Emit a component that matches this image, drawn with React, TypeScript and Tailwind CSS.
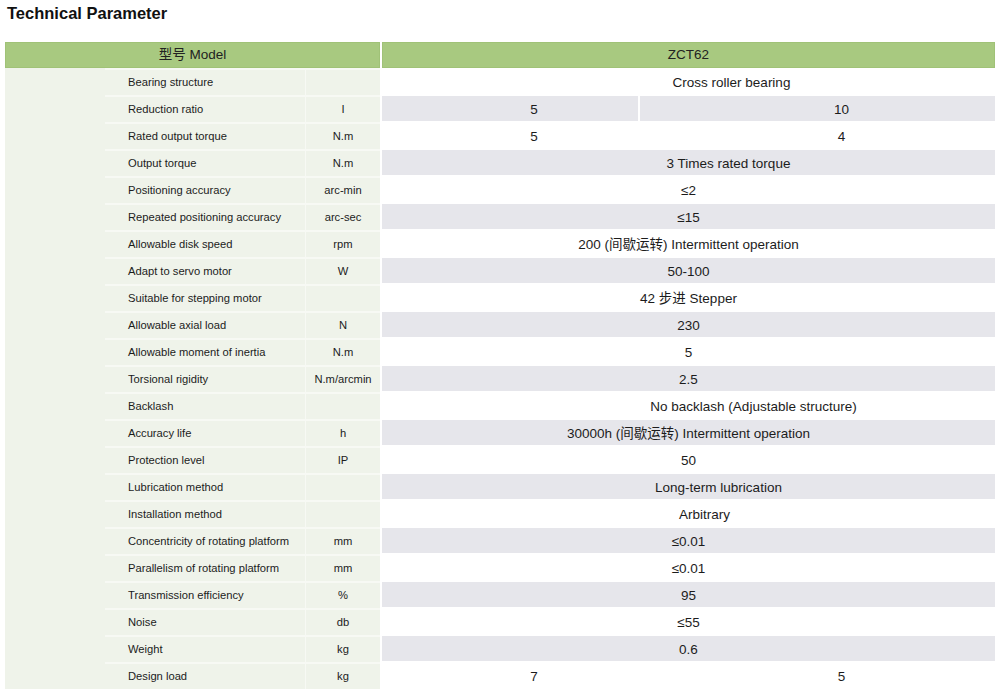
import React from 'react'

type Row = {
  label: string
  unit: string
  value?: string
  shift?: string
  split?: [string, string]
}

const rows: Row[] = [
  { label: 'Bearing structure', unit: '', value: 'Cross roller bearing', shift: 'pl-[86px]' },
  { label: 'Reduction ratio', unit: 'I', split: ['5', '10'] },
  { label: 'Rated output torque', unit: 'N.m', split: ['5', '4'] },
  { label: 'Output torque', unit: 'N.m', value: '3 Times rated torque', shift: 'pl-[80px]' },
  { label: 'Positioning accuracy', unit: 'arc-min', value: '≤2' },
  { label: 'Repeated positioning accuracy', unit: 'arc-sec', value: '≤15' },
  { label: 'Allowable disk speed', unit: 'rpm', value: '200 (间歇运转) Intermittent operation' },
  { label: 'Adapt to servo motor', unit: 'W', value: '50-100' },
  { label: 'Suitable for stepping motor', unit: '', value: '42 步进 Stepper' },
  { label: 'Allowable axial load', unit: 'N', value: '230' },
  { label: 'Allowable moment of inertia', unit: 'N.m', value: '5' },
  { label: 'Torsional rigidity', unit: 'N.m/arcmin', value: '2.5' },
  { label: 'Backlash', unit: '', value: 'No backlash (Adjustable structure)', shift: 'pl-[130px]' },
  { label: 'Accuracy life', unit: 'h', value: '30000h (间歇运转) Intermittent operation' },
  { label: 'Protection level', unit: 'IP', value: '50' },
  { label: 'Lubrication method', unit: '', value: 'Long-term lubrication', shift: 'pl-[60px]' },
  { label: 'Installation method', unit: '', value: 'Arbitrary', shift: 'pl-[32px]' },
  { label: 'Concentricity of rotating platform', unit: 'mm', value: '≤0.01' },
  { label: 'Parallelism of rotating platform', unit: 'mm', value: '≤0.01' },
  { label: 'Transmission efficiency', unit: '%', value: '95' },
  { label: 'Noise', unit: 'db', value: '≤55' },
  { label: 'Weight', unit: 'kg', value: '0.6' },
  { label: 'Design load', unit: 'kg', split: ['7', '5'] },
]

export default function App() {
  return (
    <div className="w-[1000px] h-[695px] bg-white text-[#1c1c1c] font-['Liberation_Sans','Noto_Sans_CJK_SC',sans-serif] overflow-hidden">
      <h1 className="pl-[7px] pt-[2px] h-[42px] text-[16.5px] leading-[22px] font-bold text-[#111]">
        Technical Parameter
      </h1>

      <div className="mx-[5px] w-[990px]">
        {/* header */}
        <div className="flex h-[26px] gap-[2px] text-[13.5px] text-[#222]">
          <div className="w-[375px] flex items-center justify-center pt-[1px] bg-[#a8c980] border border-[#a0c277]">
            型号 Model
          </div>
          <div className="flex-1 flex items-center justify-center pt-[1px] bg-[#a8c980] border border-[#a0c277]">
            ZCT62
          </div>
        </div>

        {/* body */}
        <div className="flex">
          <div className="w-[100px] bg-[#eff3ea]" />
          <div className="flex-1">
            {rows.map((row, i) => {
              const gray = i % 2 === 1
              const bg = gray ? 'bg-[#e6e6eb]' : 'bg-white'
              return (
                <div key={row.label} className="flex h-[27px]">
                  <div className="w-[200px] flex items-center pl-[23px] bg-[#eff3ea] border-t-2 border-[#f7f9f4] text-[11.2px]">
                    {row.label}
                  </div>
                  <div className="w-[75px] flex items-center justify-center bg-[#eff3ea] border-t-2 border-l border-[#f7f9f4] text-[11.2px]">
                    {row.unit}
                  </div>
                  <div className="w-[2px] bg-white" />
                  <div className="flex-1 py-[1px] text-[13.5px]">
                    {row.split ? (
                      <div className="flex h-full gap-[2px]">
                        <div className={`w-[256px] flex items-center justify-center pt-[3px] pl-[48px] ${bg}`}>
                          {row.split[0]}
                        </div>
                        <div className={`flex-1 flex items-center justify-center pt-[3px] pl-[48px] ${bg}`}>
                          {row.split[1]}
                        </div>
                      </div>
                    ) : (
                      <div className={`h-full flex items-center justify-center pt-[3px] ${row.shift ?? ''} ${bg}`}>
                        {row.value}
                      </div>
                    )}
                  </div>
                </div>
              )
            })}
          </div>
        </div>
      </div>
    </div>
  )
}
